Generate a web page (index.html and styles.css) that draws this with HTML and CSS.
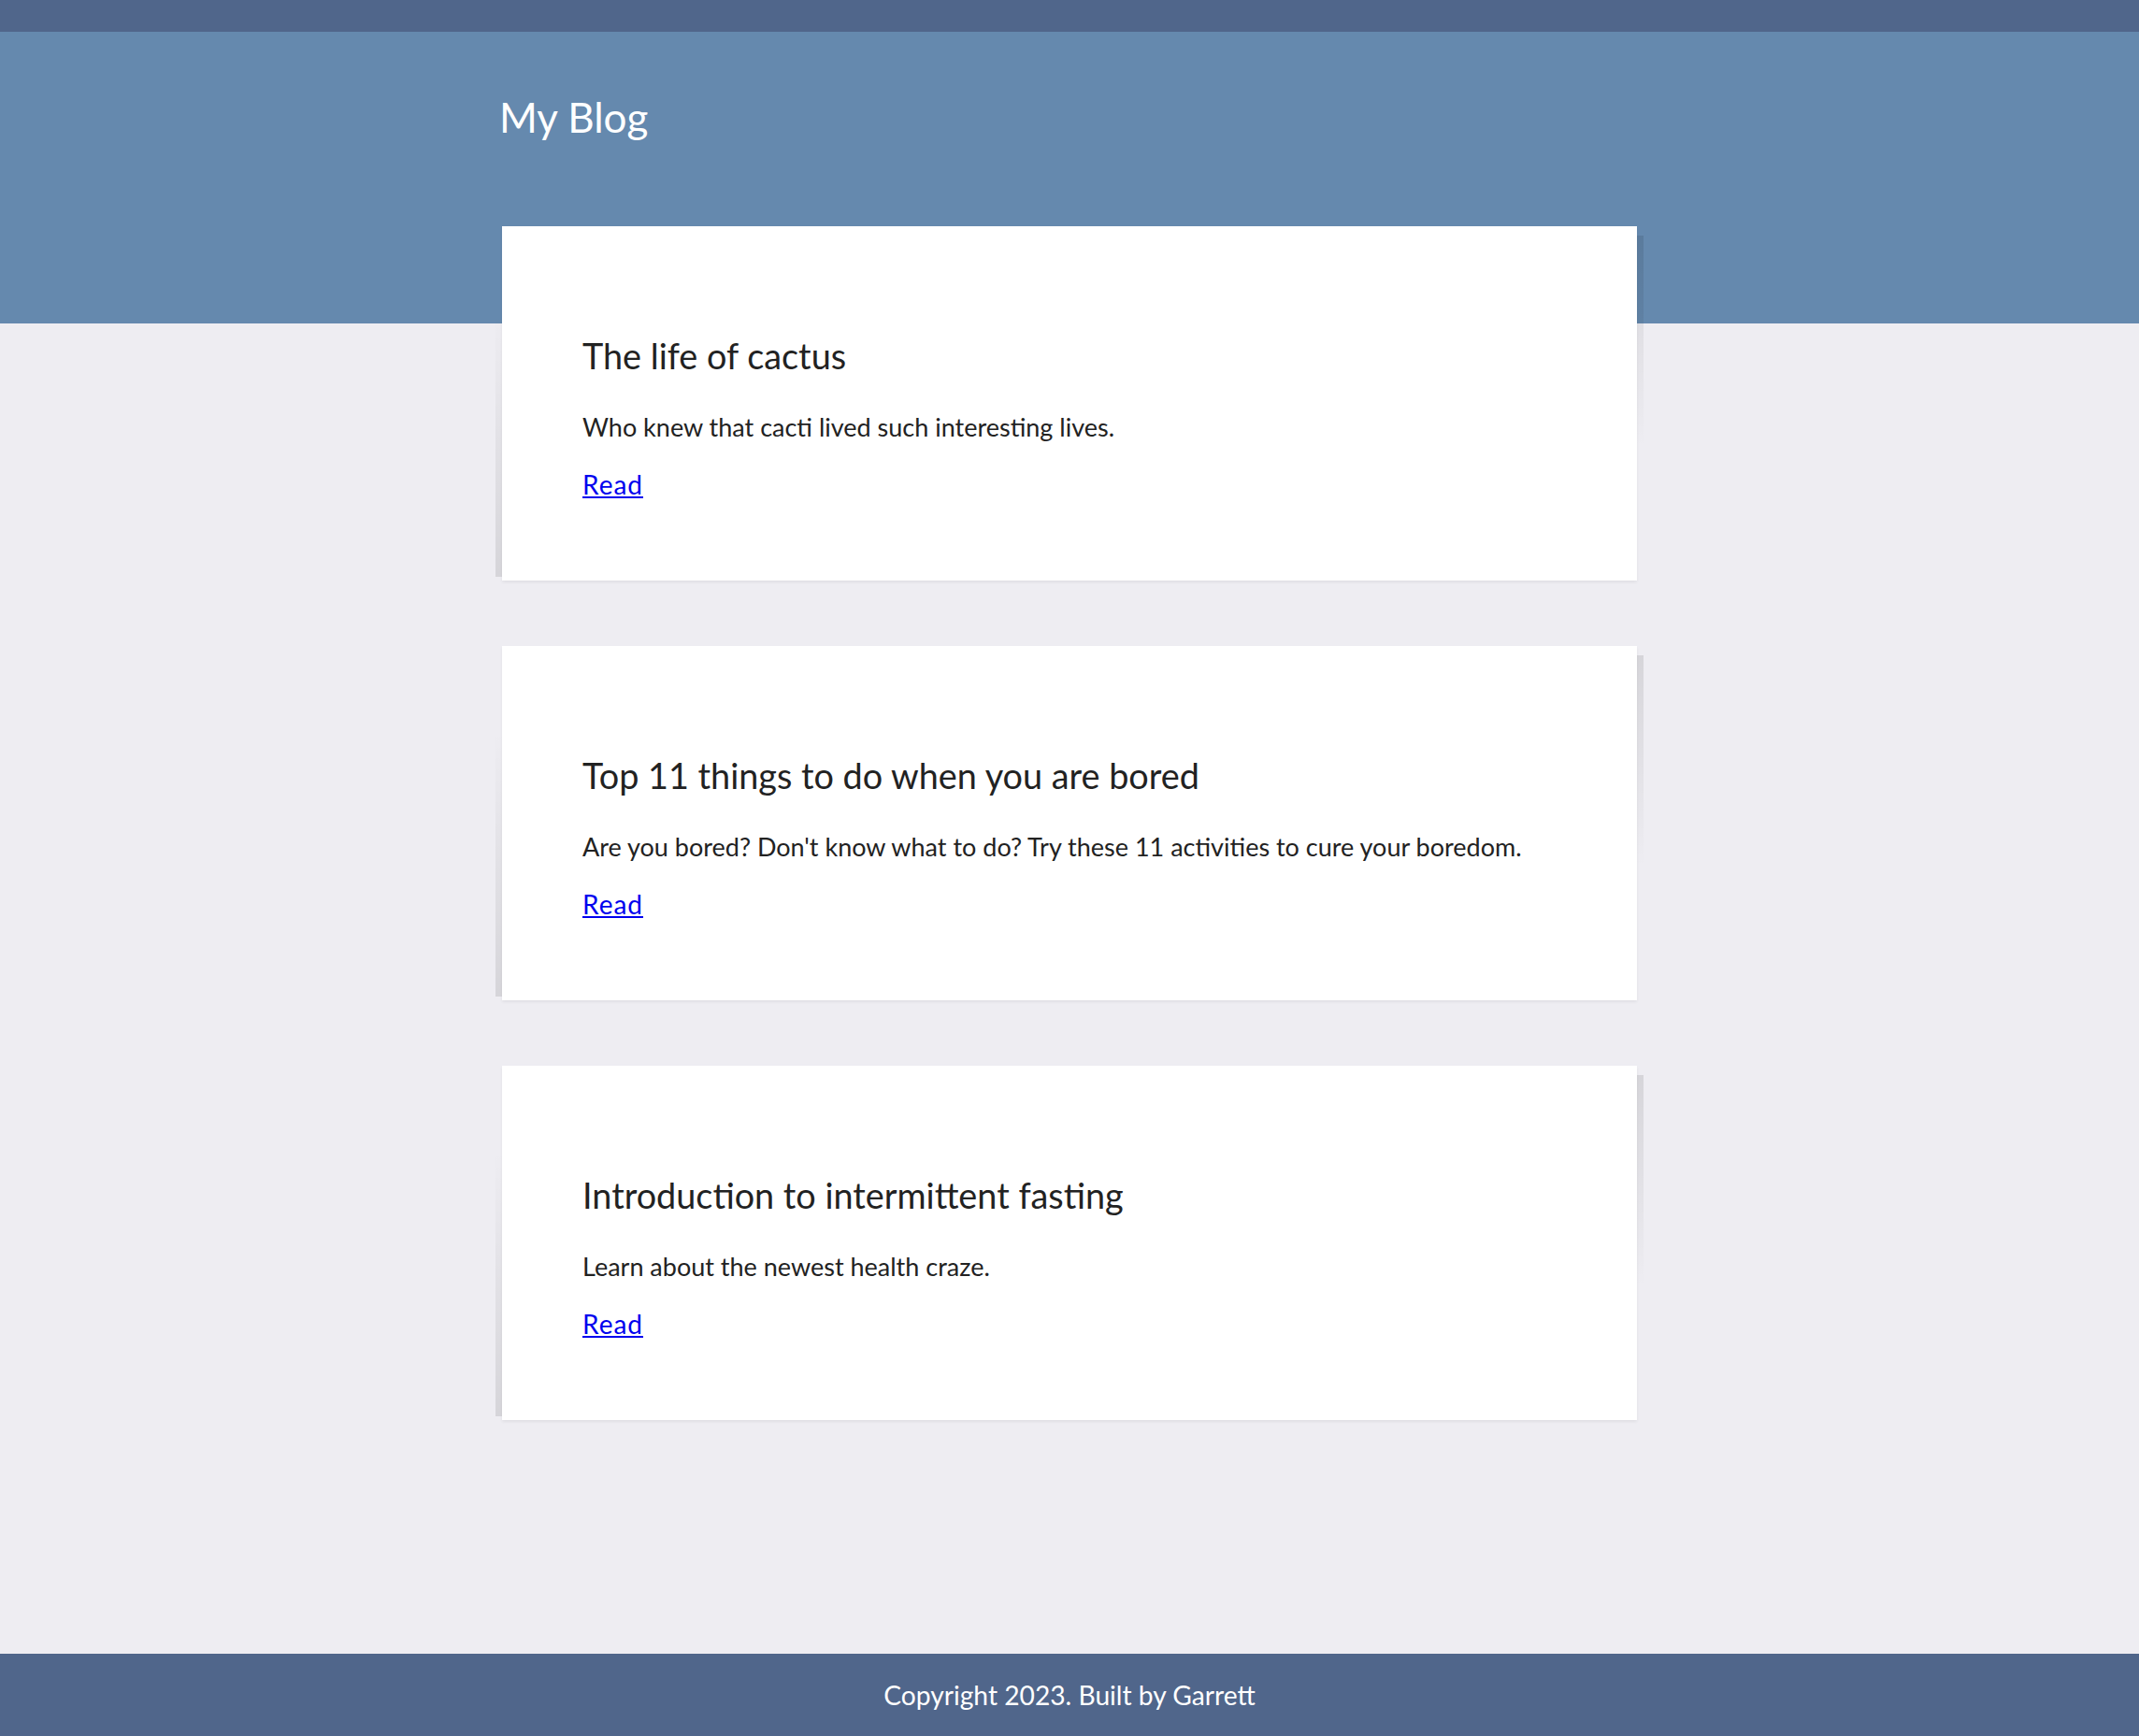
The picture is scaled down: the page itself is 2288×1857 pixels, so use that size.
FILE: index.html
```html
<!DOCTYPE html>
<html lang="en">
<head>
<meta charset="utf-8">
<title>My Blog</title>
<link rel="stylesheet" href="styles.css">
</head>
<body>
<div class="topbar"></div>
<header class="hero">
  <div class="hero-inner">
    <h1 class="site-title">My Blog</h1>
  </div>
</header>
<main class="posts">
  <article class="card">
    <h2 class="card-title">The life of cactus</h2>
    <p class="card-text">Who knew that cacti lived such interesting lives.</p>
    <a class="card-link" href="#">Read</a>
  </article>
  <article class="card">
    <h2 class="card-title">Top 11 things to do when you are bored</h2>
    <p class="card-text">Are you bored? Don't know what to do? Try these 11 activities to cure your boredom.</p>
    <a class="card-link" href="#">Read</a>
  </article>
  <article class="card">
    <h2 class="card-title">Introduction to intermittent fasting</h2>
    <p class="card-text">Learn about the newest health craze.</p>
    <a class="card-link" href="#">Read</a>
  </article>
</main>
<footer class="footer">Copyright 2023. Built by Garrett</footer>
</body>
</html>
```
FILE: styles.css
```css
html, body {
  margin: 0;
  padding: 0;
}
body {
  min-height: 100vh;
  display: flex;
  flex-direction: column;
  background: #eeedf2;
  font-family: Lato, "Open Sans", "Liberation Sans", sans-serif;
  color: #222;
}
.topbar {
  height: 34px;
  background: #50668b;
}
.hero {
  height: 312px;
  background: #6589ae;
}
.hero-inner {
  width: 1214px;
  margin: 0 auto;
  padding-top: 69px;
}
.site-title {
  margin: 0 0 0 -3px;
  font-size: 44px;
  line-height: 1;
  font-weight: 400;
  color: #fff;
}
.posts {
  flex: 1;
  width: 1214px;
  margin: -104px auto 0;
  display: flex;
  flex-direction: column;
  gap: 70px;
  padding-bottom: 100px;
}
.card {
  position: relative;
  background: #fff;
  padding: 115px 86px 85px;
  display: flex;
  flex-direction: column;
  align-items: flex-start;
  box-shadow: 0 2px 3px rgba(0, 0, 0, 0.06);
}
.card::before {
  content: "";
  position: absolute;
  top: 10px;
  right: -7px;
  width: 7px;
  height: 60%;
  background: linear-gradient(to bottom, rgba(0, 0, 0, 0.1), rgba(0, 0, 0, 0));
}
.card::after {
  content: "";
  position: absolute;
  bottom: 4px;
  left: -7px;
  width: 7px;
  height: 75%;
  background: linear-gradient(to top, rgba(0, 0, 0, 0.1), rgba(0, 0, 0, 0));
}
.card-title {
  margin: 0;
  font-size: 37.8px;
  line-height: 48px;
  font-weight: 400;
  color: #222;
}
.card-text {
  margin: 34px 0 0;
  font-size: 27px;
  line-height: 36px;
}
.card-link {
  margin-top: 25px;
  font-size: 28px;
  line-height: 36px;
  letter-spacing: 1px;
  color: #0000ee;
}
.footer {
  height: 88px;
  background: #50668b;
  color: #fff;
  font-size: 28.2px;
  display: flex;
  align-items: center;
  justify-content: center;
}
```
